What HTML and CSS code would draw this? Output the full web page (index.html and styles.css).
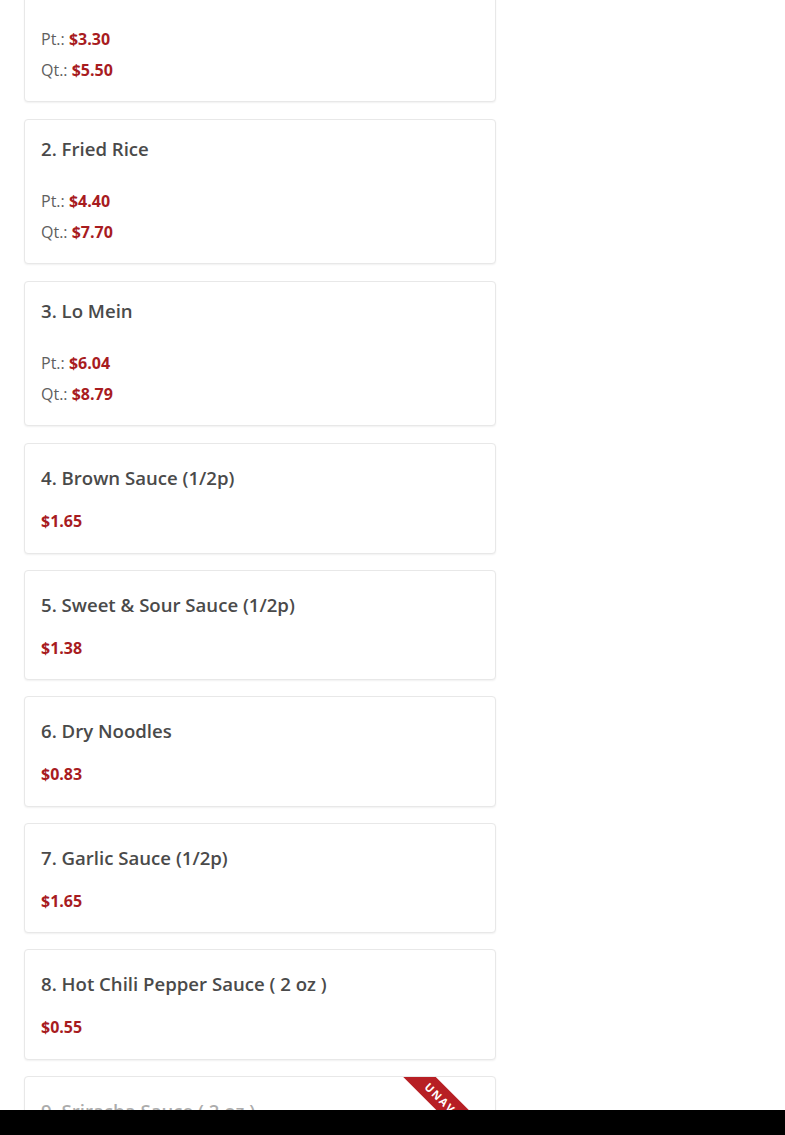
FILE: index.html
```html
<!DOCTYPE html>
<html lang="en">

<head>
    <meta charset="UTF-8">
    <meta name="viewport" content="width=device-width, initial-scale=1.0">
    <title>Menu</title>
    <link rel="stylesheet" href="styles.css">
</head>

<body>
    <div class="menu-list">
        <div class="menu-item multi first">
            <h4 class="item-name">1. White Rice</h4>
            <ul class="price-list">
                <li><span class="size">Pt.:</span> <span class="price">$3.30</span></li>
                <li><span class="size">Qt.:</span> <span class="price">$5.50</span></li>
            </ul>
        </div>
        <div class="menu-item multi">
            <h4 class="item-name">2. Fried Rice</h4>
            <ul class="price-list">
                <li><span class="size">Pt.:</span> <span class="price">$4.40</span></li>
                <li><span class="size">Qt.:</span> <span class="price">$7.70</span></li>
            </ul>
        </div>
        <div class="menu-item multi">
            <h4 class="item-name">3. Lo Mein</h4>
            <ul class="price-list">
                <li><span class="size">Pt.:</span> <span class="price">$6.04</span></li>
                <li><span class="size">Qt.:</span> <span class="price">$8.79</span></li>
            </ul>
        </div>
        <div class="menu-item single">
            <h4 class="item-name">4. Brown Sauce (1/2p)</h4>
            <div class="price-line"><span class="price">$1.65</span></div>
        </div>
        <div class="menu-item single">
            <h4 class="item-name">5. Sweet &amp; Sour Sauce (1/2p)</h4>
            <div class="price-line"><span class="price">$1.38</span></div>
        </div>
        <div class="menu-item single">
            <h4 class="item-name">6. Dry Noodles</h4>
            <div class="price-line"><span class="price">$0.83</span></div>
        </div>
        <div class="menu-item single">
            <h4 class="item-name">7. Garlic Sauce (1/2p)</h4>
            <div class="price-line"><span class="price">$1.65</span></div>
        </div>
        <div class="menu-item single">
            <h4 class="item-name">8. Hot Chili Pepper Sauce ( 2 oz )</h4>
            <div class="price-line"><span class="price">$0.55</span></div>
        </div>
        <div class="menu-item single unavailable">
            <div class="ribbon">UNAVAILABLE</div>
            <h4 class="item-name">9. Sriracha Sauce ( 2 oz )</h4>
            <div class="price-line"><span class="price">$0.55</span></div>
        </div>
    </div>
    <div class="bottom-bar"></div>
</body>

</html>
```

FILE: styles.css
```css
body {
    margin: 0;
    font-family: 'Open Sans', 'Liberation Sans', sans-serif;
    background-color: #fff;
    overflow: hidden;
}

.menu-list {
    display: flex;
    flex-direction: column;
    gap: 16px;
    padding-left: 24px;
}

.menu-item {
    position: relative;
    overflow: hidden;
    box-sizing: border-box;
    width: 472px;
    padding: 0 16px 16px;
    border: 1px solid #e8e8e8;
    border-radius: 4px;
    box-shadow: 0 1px 2px rgba(0, 0, 0, 0.06);
    background-color: #fff;
}

.menu-item.first {
    margin-top: -43px;
}

.menu-item.multi {
    padding-top: 17px;
    padding-bottom: 15px;
    margin-bottom: 1px;
}

.menu-item.single {
    padding-top: 22px;
    padding-bottom: 15.6px;
}

.item-name {
    margin: 0;
    font-size: 18.6px;
    line-height: 24px;
    font-weight: 600;
    color: #4a4a4a;
}

.price-list {
    list-style: none;
    margin: 25px 0 0;
    padding: 0;
}

.price-list li,
.price-line {
    font-size: 16px;
    line-height: 31px;
}

.price-line {
    margin-top: 16px;
}

.size {
    color: #606060;
}

.price {
    font-weight: 700;
    color: #a81c1f;
}

.unavailable .item-name,
.unavailable .price-line {
    opacity: 0.45;
}

.ribbon {
    position: absolute;
    left: 335px;
    top: 29px;
    width: 200px;
    height: 23px;
    line-height: 23px;
    text-align: center;
    background-color: #b71f24;
    color: #fff;
    font-size: 11px;
    font-weight: 700;
    letter-spacing: 1.5px;
    transform: rotate(45deg);
}

.bottom-bar {
    position: fixed;
    left: 0;
    right: 0;
    bottom: 0;
    height: 25px;
    background-color: #000;
}
```
